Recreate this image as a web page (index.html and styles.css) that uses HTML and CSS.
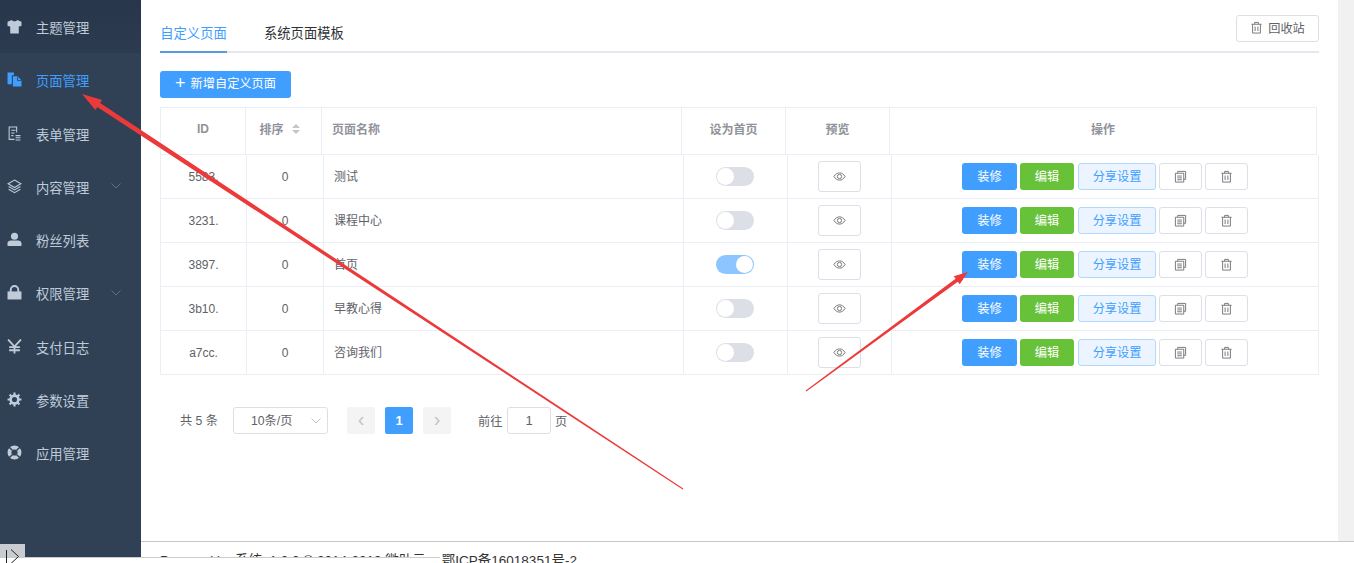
FILE: index.html
```html
<!DOCTYPE html>
<html lang="zh-CN">
<head>
<meta charset="utf-8">
<title>页面管理</title>
<link rel="stylesheet" href="styles.css">
</head>
<body>
<svg class="defs" width="0" height="0" aria-hidden="true">
  <symbol id="i-eye" viewBox="0 0 14 14"><path d="M1 7c1.6-2.6 3.6-3.9 6-3.9s4.400 1.300 6 3.900c-1.600 2.600-3.600 3.900-6 3.900S2.600 9.600 1 7z" fill="none" stroke="currentColor"/><circle cx="7" cy="7" r="2.300" fill="none" stroke="currentColor"/></symbol>
  <symbol id="i-copy" viewBox="0 0 14 14"><path d="M4 3V1.500h8.500V10H10.500M1.500 3.500h9v9.500h-9zM3.500 6.500h5M3.500 8.500h5M3.500 10.500h5" fill="none" stroke="currentColor"/></symbol>
  <symbol id="i-trash" viewBox="0 0 14 14"><path d="M1.500 3.500h11M5 3.500V1.500h4v2M2.800 3.500v9.500h8.400V3.500M5.500 6v4.800M8.500 6v4.800" fill="none" stroke="currentColor"/></symbol>
  <symbol id="i-chev" viewBox="0 0 10 6"><path d="M.5.500 5 5 9.500.5" fill="none" stroke="currentColor"/></symbol>
</svg>
<div class="app">
  <nav class="sidebar">
    <a class="nav-item nav-top"><svg class="nav-icon" viewBox="0 0 14 14"><path d="M4.500 1 .5 2.500v4l2.500.5v6.500h8V7l2.500-.5v-4L9.500 1C9 2.500 5 2.500 4.500 1z" fill="currentColor"/></svg><span>主题管理</span></a>
    <a class="nav-item nav-active"><svg class="nav-icon" viewBox="0 0 14 14"><path d="M.5.500h6V3H4.500v8.500H.5zM5.500 4h4.300l3.700 3.700v5.800h-8z" fill="currentColor"/><path d="M9.800 4.500v3.500h3.500" fill="none" stroke="#304156" stroke-width=".8"/></svg><span>页面管理</span></a>
    <a class="nav-item"><svg class="nav-icon" viewBox="0 0 14 14"><path d="M2 13V1h7v5M4 4h4M4 6.500h3M4 9h2M2 12.500h5M8 9h4.500M8 11h4.500M8 13h4.500" fill="none" stroke="currentColor"/></svg><span>表单管理</span></a>
    <a class="nav-item"><svg class="nav-icon" viewBox="0 0 14 14"><path d="M7 1 13 4.500 7 8 1 4.500zM1.500 7 7 10.200 12.500 7M1.500 9.500 7 12.700l5.500-3.200" fill="none" stroke="currentColor"/></svg><span>内容管理</span><svg class="nav-chev"><use href="#i-chev"/></svg></a>
    <a class="nav-item"><svg class="nav-icon" viewBox="0 0 14 14"><circle cx="7" cy="4" r="3.300" fill="currentColor"/><path d="M.5 13V10.500c0-1.500 1.500-2.500 3-2.500h7c1.500 0 3 1 3 2.500V13z" fill="currentColor"/></svg><span>粉丝列表</span></a>
    <a class="nav-item"><svg class="nav-icon" viewBox="0 0 14 14"><path d="M3.500 6.500V4.500a3.500 3.500 0 0 1 7 0v2" fill="none" stroke="currentColor" stroke-width="1.800"/><path d="M.5 6h13v7.500H.5z" fill="currentColor"/></svg><span>权限管理</span><svg class="nav-chev"><use href="#i-chev"/></svg></a>
    <a class="nav-item"><svg class="nav-icon" viewBox="0 0 14 14"><path d="M1 .5 7 7l6-6.500M7 7v6.500M2 7.500h10M2 10.500h10" fill="none" stroke="currentColor" stroke-width="1.700"/></svg><span>支付日志</span></a>
    <a class="nav-item"><svg class="nav-icon" viewBox="0 0 14 14"><circle cx="7" cy="7" r="3.600" fill="none" stroke="currentColor" stroke-width="2.400"/><path d="M7 .5v13M.5 7h13M2.400 2.400l9.200 9.200M11.600 2.400l-9.200 9.200" stroke="currentColor" stroke-width="2" stroke-dasharray="2.500 8 2.500 0"/></svg><span>参数设置</span></a>
    <a class="nav-item"><svg class="nav-icon" viewBox="0 0 14 14"><circle cx="7" cy="7" r="4.700" fill="none" stroke="currentColor" stroke-width="3.600"/><path d="M2 2l3 3M12 2 9 5M2 12l3-3M12 12 9 9" stroke="#304156" stroke-width="1.300"/></svg><span>应用管理</span></a>
  </nav>
  <div class="main">
    <div class="body-row">
      <div class="content">
        <div class="tabs">
          <a class="tab tab-active">自定义页面</a>
          <a class="tab">系统页面模板</a>
          <button class="btn-recycle"><svg class="ico"><use href="#i-trash"/></svg>回收站</button>
        </div>
        <button class="btn-add"><span class="plus">+</span>新增自定义页面</button>
        <div class="table">
          <div class="thead">
            <div class="th">ID</div>
            <div class="th th-sort">排序<span class="sort"><i class="up"></i><i class="down"></i></span></div>
            <div class="th th-left">页面名称</div>
            <div class="th">设为首页</div>
            <div class="th">预览</div>
            <div class="th">操作</div>
          </div>
          <div class="tr">
            <div class="td td-num">5583.</div><div class="td td-num">0</div><div class="td td-left">测试</div>
            <div class="td"><span class="switch"></span></div>
            <div class="td"><button class="btn-eye"><svg class="ico"><use href="#i-eye"/></svg></button></div>
            <div class="td td-ops"><button class="btn blue">装修</button><button class="btn green">编辑</button><button class="btn share">分享设置</button><button class="btn plain"><svg class="ico"><use href="#i-copy"/></svg></button><button class="btn plain"><svg class="ico"><use href="#i-trash"/></svg></button></div>
          </div>
          <div class="tr">
            <div class="td td-num">3231.</div><div class="td td-num">0</div><div class="td td-left">课程中心</div>
            <div class="td"><span class="switch"></span></div>
            <div class="td"><button class="btn-eye"><svg class="ico"><use href="#i-eye"/></svg></button></div>
            <div class="td td-ops"><button class="btn blue">装修</button><button class="btn green">编辑</button><button class="btn share">分享设置</button><button class="btn plain"><svg class="ico"><use href="#i-copy"/></svg></button><button class="btn plain"><svg class="ico"><use href="#i-trash"/></svg></button></div>
          </div>
          <div class="tr">
            <div class="td td-num">3897.</div><div class="td td-num">0</div><div class="td td-left">首页</div>
            <div class="td"><span class="switch on"></span></div>
            <div class="td"><button class="btn-eye"><svg class="ico"><use href="#i-eye"/></svg></button></div>
            <div class="td td-ops"><button class="btn blue">装修</button><button class="btn green">编辑</button><button class="btn share">分享设置</button><button class="btn plain"><svg class="ico"><use href="#i-copy"/></svg></button><button class="btn plain"><svg class="ico"><use href="#i-trash"/></svg></button></div>
          </div>
          <div class="tr">
            <div class="td td-num">3b10.</div><div class="td td-num">0</div><div class="td td-left">早教心得</div>
            <div class="td"><span class="switch"></span></div>
            <div class="td"><button class="btn-eye"><svg class="ico"><use href="#i-eye"/></svg></button></div>
            <div class="td td-ops"><button class="btn blue">装修</button><button class="btn green">编辑</button><button class="btn share">分享设置</button><button class="btn plain"><svg class="ico"><use href="#i-copy"/></svg></button><button class="btn plain"><svg class="ico"><use href="#i-trash"/></svg></button></div>
          </div>
          <div class="tr">
            <div class="td td-num">a7cc.</div><div class="td td-num">0</div><div class="td td-left">咨询我们</div>
            <div class="td"><span class="switch"></span></div>
            <div class="td"><button class="btn-eye"><svg class="ico"><use href="#i-eye"/></svg></button></div>
            <div class="td td-ops"><button class="btn blue">装修</button><button class="btn green">编辑</button><button class="btn share">分享设置</button><button class="btn plain"><svg class="ico"><use href="#i-copy"/></svg></button><button class="btn plain"><svg class="ico"><use href="#i-trash"/></svg></button></div>
          </div>
        </div>
        <div class="pager">
          <span class="total">共 5 条</span>
          <div class="size">10条/页<svg class="size-chev"><use href="#i-chev"/></svg></div>
          <span class="page-btn">‹</span>
          <span class="page-btn current">1</span>
          <span class="page-btn">›</span>
          <span class="jump">前往</span>
          <span class="jump-input">1</span>
          <span class="jump-unit">页</span>
        </div>
      </div>
      <div class="scroll-track"></div>
    </div>
    <footer class="footer">Powered by 系统: 1.0.0 © 2014-2019 微助云<span class="icp">鄂ICP备16018351号-2</span></footer>
  </div>
  <div class="bottom-mask"></div>
  <div class="collapse"><svg viewBox="0 0 25 19" width="25" height="19"><path d="M6.500 6v13M11 5.500l7.500 7-7.500 7" fill="none" stroke="#222" stroke-width="1"/></svg></div>
  <svg class="annot" viewBox="0 0 1354 563" width="1354" height="563">
    <polygon points="82,94 102,100 100.100,103 683.300,488.600 682.700,489.400 97.300,107 95.400,110" fill="#ec3a3a"/>
    <polygon points="968,272 959.700,284.300 957.800,281.800 806.300,391.400 805.700,390.600 955.600,278.800 953.700,276.300" fill="#ec3a3a"/>
  </svg>
</div>
</body>
</html>
```
FILE: styles.css
```css
* { box-sizing: border-box; }
html, body { margin: 0; height: 563px; overflow: hidden; background: #fff; }
body { font-family: "Liberation Sans", "Noto Sans CJK SC", sans-serif; font-size: 13.3px; color: #606266; }
.defs { position: absolute; }
button { font: inherit; cursor: pointer; }
.app { position: relative; display: flex; width: 1354px; height: 563px; overflow: hidden; }

.sidebar { flex: 0 0 141px; height: 558px; background: #304156; color: #bfcbd9; }
.nav-item { display: flex; align-items: center; height: 53.25px; padding: 0 20px 0 7px; }
.nav-item span { padding-top: 2px; }
.nav-top { background: linear-gradient(#27364a, #2c3b4f); }
.nav-active { color: #409eff; }
.nav-icon { width: 15px; height: 15px; margin-right: 14px; flex: none; }
.nav-chev { width: 10px; height: 6px; margin-left: auto; color: #5f7186; }

.main { flex: 1; display: flex; flex-direction: column; min-width: 0; }
.body-row { display: flex; height: 541px; flex: none; }
.content { flex: 1; padding: 0 19px; min-width: 0; }
.scroll-track { flex: 0 0 16px; background: #f1f1f1; }

.tabs { display: flex; align-items: flex-end; height: 53px; border-bottom: 2px solid #e4e7ed; position: relative; }
.tab { height: 53px; margin-bottom: -2px; padding-top: 26px; color: #303133; line-height: 16px; border-bottom: 2px solid transparent; white-space: nowrap; }
.tab-active { width: 67px; text-align: center; color: #409eff; border-bottom-color: #5b9bd5; margin-right: 37px; }
.btn-recycle { margin-left: auto; align-self: flex-start; margin-top: 15px; width: 83px; height: 27px; padding: 0 0 2px; display: flex; align-items: center; justify-content: center; gap: 5px; background: #fff; border: 1px solid #dcdfe6; border-radius: 3px; color: #606266; font-size: 12.200px; }
.ico { width: 13px; height: 13px; color: #6f7175; flex: none; }

.btn-add { display: block; margin-top: 18px; width: 131px; height: 27px; padding: 0 0 3px; background: #409eff; border: 0; border-radius: 3px; color: #fff; font-size: 12.200px; }
.plus { font-size: 18px; font-weight: 300; margin-right: 5px; line-height: 1; vertical-align: -1px; }

.table { margin-top: 9px; width: 1159px; }
.thead, .tr { display: grid; }
.thead { grid-template-columns: 85px 76px 360px 104px 104px 427px; width: 1157px; height: 48px; border-top: 1px solid #ebeef5; border-left: 1px solid #ebeef5; }
.tr { grid-template-columns: 86px 77px 360px 104px 104px 427px; height: 44px; border-left: 1px solid #ebeef5; }
.th, .td { display: flex; align-items: center; justify-content: center; border-right: 1px solid #ebeef5; border-bottom: 1px solid #ebeef5; min-width: 0; }
.th { font-weight: bold; font-size: 12px; color: #909399; padding-bottom: 5px; }
.th-sort { padding-right: 8px; }
.td { font-size: 12px; color: #606266; padding-bottom: 1px; }
.td-num { padding-bottom: 0; }
.th-left, .td-left { justify-content: flex-start; padding-left: 10px; }
.td-left { padding-bottom: 3px; }
.sort { display: inline-flex; flex-direction: column; gap: 2px; margin-left: 8px; }
.sort i { display: block; width: 0; height: 0; border-left: 4px solid transparent; border-right: 4px solid transparent; }
.sort .up { border-bottom: 4px solid #c0c4cc; }
.sort .down { border-top: 4px solid #c0c4cc; }

.switch { position: relative; display: block; width: 38px; height: 19px; margin: 1px 2px 0 0; border-radius: 10px; background: #dcdfe6; }
.switch::after { content: ""; position: absolute; left: 1px; top: 1px; width: 17px; height: 17px; border-radius: 50%; background: #fff; }
.switch.on { background: #8cc5ff; }
.switch.on::after { left: 20px; }
.btn-eye { width: 43px; height: 31px; padding: 0; display: flex; align-items: center; justify-content: center; background: #fff; border: 1px solid #dcdfe6; border-radius: 3px; }

.td-ops { gap: 3px; padding: 0; }
.btn { height: 27px; padding: 0 0 1px; display: flex; align-items: center; justify-content: center; border-radius: 3px; font-size: 12.200px; border: 1px solid transparent; }
.blue { width: 55px; background: #409eff; color: #fff; }
.green { width: 54px; background: #67c23a; color: #fff; margin-right: 1px; }
.share { width: 78px; background: #ecf5ff; border-color: #b3d8ff; color: #409eff; }
.plain { width: 43px; background: #fff; border-color: #dcdfe6; }

.pager { display: flex; align-items: center; height: 27px; margin-top: 32px; padding-left: 20px; font-size: 12.200px; }
.total { width: 53px; padding-bottom: 2px; }
.size { position: relative; width: 95px; height: 27px; border: 1px solid #dcdfe6; border-radius: 3px; padding-left: 17px; line-height: 27px; margin-right: 19px; }
.size-chev { position: absolute; right: 6px; top: 10px; width: 10px; height: 6px; color: #c0c4cc; }
.page-btn { width: 28px; height: 27px; margin-right: 10px; display: flex; align-items: center; justify-content: center; background: #f4f4f5; border-radius: 2px; color: #c0c4cc; font-size: 20px; padding-bottom: 3px; }
.page-btn.current { background: #409eff; color: #fff; font-size: 13px; font-weight: bold; padding-bottom: 0; }
.jump { margin-left: 17px; width: 29px; }
.jump-input { width: 44px; height: 27px; border: 1px solid #dcdfe6; border-radius: 3px; text-align: center; line-height: 25px; font-size: 13px; margin-right: 4px; }

.footer { flex: none; border-top: 1px solid #c8c8c8; padding: 9px 0 0 19px; font-size: 13.500px; line-height: 20px; color: #333; white-space: nowrap; }
.icp { margin-left: 16px; }

.bottom-mask { position: absolute; left: 0; top: 557px; width: 440px; height: 6px; background: #fff; border-top: 1px solid #ccc; }
.collapse { position: absolute; left: 0; top: 544px; width: 25px; height: 14px; background: #c9ccd1; overflow: visible; }
.collapse svg { display: block; overflow: visible; }
.annot { position: absolute; left: 0; top: 0; pointer-events: none; }
```
